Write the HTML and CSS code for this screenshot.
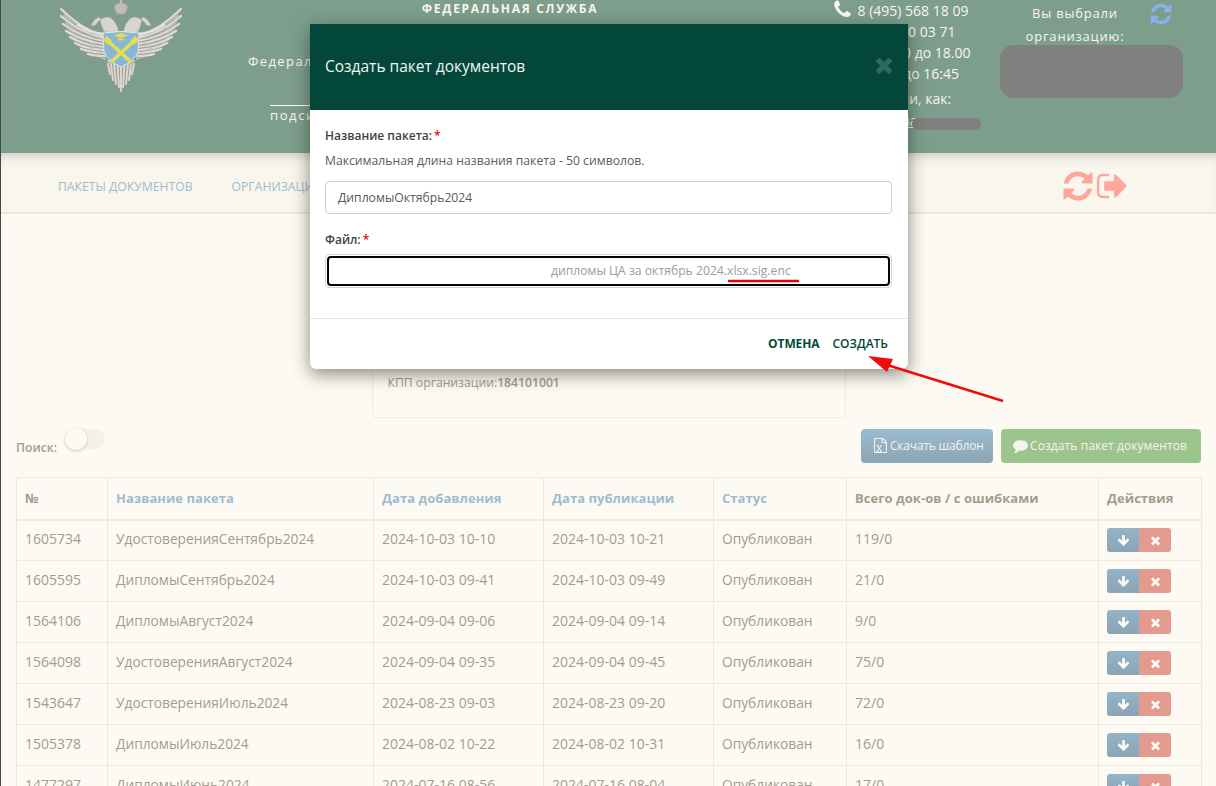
FILE: index.html
```html
<!DOCTYPE html>
<html lang="ru">
<head>
<meta charset="utf-8">
<title>Пакеты документов</title>
<link rel="stylesheet" href="styles.css">
</head>
<body>
<svg class="sprite" width="0" height="0">
  <symbol id="i-refresh" viewBox="0 0 1792 1792"><path d="M1639 1056q0 5-1 7-64 268-268 434.5t-478 166.5q-146 0-282.5-55t-243.5-157l-129 129q-19 19-45 19t-45-19-19-45v-448q0-26 19-45t45-19h448q26 0 45 19t19 45-19 45l-137 137q71 66 161 102t187 36q134 0 250-65t186-179q11-17 53-117 8-23 30-23h192q13 0 22.5 9.5t9.5 22.5zm25-800v448q0 26-19 45t-45 19h-448q-26 0-45-19t-19-45 19-45l138-138q-148-137-349-137-134 0-250 65t-186 179q-11 17-53 117-8 23-30 23h-199q-13 0-22.5-9.5t-9.5-22.5v-7q65-268 270-434.5t480-166.5q146 0 284 55.5t245 156.5l130-129q19-19 45-19t45 19 19 45z"/></symbol>
  <symbol id="i-phone" viewBox="0 0 1792 1792"><path d="M1600 1240q0 27-10 70.5t-21 68.5q-21 50-122 106-94 51-186 51-27 0-53-3.5t-57.5-12.5-47-14.5-55.5-20.5-49-18q-98-35-175-83-127-79-264-216t-216-264q-48-77-83-175-3-9-18-49t-20.5-55.5-14.5-47-12.5-57.5-3.5-53q0-92 51-186 56-101 106-122 25-11 68.5-21t70.5-10q14 0 21 3 18 6 53 76 11 19 30 54t35 63.5 31 53.5q3 4 17.5 25t21.5 35.5 7 28.5q0 20-28.5 50t-62 55-62 53-28.5 46q0 9 5 22.5t8.5 20.5 14 24 11.5 19q76 137 174 235t235 174q2 1 19 11.5t24 14 20.5 8.5 22.5 5q18 0 46-28.5t53-62 55-62 50-28.5q14 0 28.5 7t35.5 21.5 25 17.5q25 15 53.5 31t63.5 35 54 30q70 35 76 53 3 7 3 21z"/></symbol>
  <symbol id="i-signout" viewBox="0 0 1664 1792"><path d="M704 1440q0 4 1 20t.5 26.5-3 23.5-10 19.5-20.5 6.5h-320q-119 0-203.5-84.5t-84.5-203.5v-704q0-119 84.5-203.5t203.5-84.5h320q13 0 22.5 9.5t9.5 22.5q0 4 1 20t.5 26.5-3 23.5-10 19.5-20.5 6.5h-320q-66 0-113 47t-47 113v704q0 66 47 113t113 47h312l11.5 1 11.5 3 8 5.5 7 9 2 13.5zm928-544q0 26-19 45l-544 544q-19 19-45 19t-45-19-19-45v-288h-448q-26 0-45-19t-19-45v-384q0-26 19-45t45-19h448v-288q0-26 19-45t45-19 45 19l544 544q19 19 19 45z"/></symbol>
  <symbol id="i-comment" viewBox="0 0 1792 1792"><path d="M1792 896q0 174-120 321.5t-326 233-450 85.5q-70 0-145-8-198 175-460 242-49 14-114 22-17 2-30.5-9t-17.5-29v-1q-3-4-.5-12t2-10 4.5-9.5l6-9 7-8.5 8-9q7-8 31-34.5t34.5-38 31-39.5 32.5-51 27-59 26-76q-157-89-247.5-220t-90.5-281q0-130 71-248.5t191-204.5 286-136.5 348-50.5q244 0 450 85.5t326 233 120 321.5z"/></symbol>
  <symbol id="i-down" viewBox="0 0 1792 1792"><path d="M1675 832q0 53-37 90l-651 652q-39 37-91 37-53 0-90-37l-651-652q-38-36-38-90 0-53 38-91l74-75q39-37 91-37 53 0 90 37l294 294v-704q0-52 38-90t90-38h128q52 0 90 38t38 90v704l294-294q37-37 90-37 52 0 91 37l75 75q37 39 37 91z"/></symbol>
  <symbol id="i-times" viewBox="0 0 1792 1792"><path d="M1490 1322q0 40-28 68l-136 136q-28 28-68 28t-68-28l-294-294-294 294q-28 28-68 28t-68-28l-136-136q-28-28-28-68t28-68l294-294-294-294q-28-28-28-68t28-68l136-136q28-28 68-28t68 28l294 294 294-294q28-28 68-28t68 28l136 136q28 28 28 68t-28 68l-294 294 294 294q28 28 28 68z"/></symbol>
  <symbol id="i-excel" viewBox="0 0 1792 1792"><path d="M1596 380q28 28 48 76t20 88v1152q0 40-28 68t-68 28h-1344q-40 0-68-28t-28-68v-1600q0-40 28-68t68-28h896q40 0 88 20t76 48zm-444-244v376h376q-10-29-22-41l-313-313q-12-12-41-22zm384 1528v-1024h-416q-40 0-68-28t-28-68v-416h-768v1536h1280zm-1128-141v106h281v-106h-75l103-161q5-7 10-16.5t7.5-13.5 3.5-4h2q1 4 5 10 2 4 4.5 7.5t6 8 6.5 8.5l107 161h-76v106h291v-106h-68l-192-273 195-282h67v-107h-279v107h74l-103 159q-4 7-10 16.5t-9 13.5l-2 3h-2q-1-4-5-10-6-11-17-23l-106-159h76v-107h-290v107h68l189 272-194 283h-68z"/></symbol>
</svg>

<div class="page">
  <header class="top">
    <div class="logo-col">
      <svg class="logo" viewBox="0 0 122 92" width="122" height="92">
        <defs>
          <path id="feathers" d="M44 36 Q22 30 1 9 M44 38 Q20 33 1 16 M44 41 Q20 37 3 24 M44 44 Q22 41 6 31 M44 47 Q24 45 10 37 M44 50 Q26 49 15 43 M45 53 Q30 52 21 49 M45 56 Q34 56 28 54"/>
          <path id="tail" d="M48 64 L50 74 M51 64 L53 80 M54 64 L56 84 M57.500 64 L59 87 M61 64 L61 91 M64.500 64 L63 87 M68 64 L66 84 M71 64 L69 80 M74 64 L72 74"/>
          <g id="wing">
            <path class="wing-base" d="M44 33 Q24 30 3 12 Q6 30 14 42 Q26 54 46 60Z"/>
            <use href="#feathers" class="feather-edge"/>
            <use href="#feathers" class="feather-face"/>
            <path class="wing-band" d="M18 25 Q30 33 44 34"/>
            <path class="wing-tex" d="M16 30 L38 38 M20 36 L40 43 M24 42 L42 48 M30 48 L43 53"/>
            <path class="head" d="M31 26 Q33 19 39 17 L42 20 Q38 20 36 25 Z"/>
            <path class="head" d="M40 20 Q46 15 51 18 Q57 22 59 33 L44 32 Q41 26 40 20Z"/>
          </g>
        </defs>
        <use href="#wing"/>
        <use href="#wing" transform="matrix(-1 0 0 1 122 0)"/>
        <path class="wing-base" d="M47 60 H75 L70 76 L61 90 L52 76Z"/>
        <use href="#tail" class="feather-edge-thin"/>
        <use href="#tail" class="feather-face-thin"/>
        <path class="crown" d="M54 6 Q61 -1 68 6 L66 13 Q61 16 56 13Z"/>
        <path class="crown-top" d="M60 -2 H62 V3 H60Z"/>
        <path class="shield" d="M43 33 Q61 30 79 33 L78 52 Q74 61 61 67 Q48 61 44 52Z"/>
        <path class="arms-line" d="M47 40 L71 62 M75 40 L51 62"/>
        <path class="arms-line-head" d="M45 38 L50 43 M77 38 L72 43"/>
        <path class="arms" d="M54 36 L61 33 L68 35.500 L61 38Z M58 38.500 H64 V40.500 H58Z"/>
      </svg>
    </div>
    <div class="center-col">
      <div class="service">ФЕДЕРАЛЬНАЯ СЛУЖБА</div>
      <div class="registry">Федеральный реестр сведений о документах</div>
      <div class="subsystem">подсистема ведения реестра</div>
    </div>
    <div class="contact-col">
      <div class="contact-line"><svg class="ic-phone"><use href="#i-phone"/></svg>8 (495) 568 18 09</div>
      <div class="contact-line">8 (800) 100 03 71</div>
      <div class="contact-line">Пн-Чт с 9.00 до 18.00</div>
      <div class="contact-line">Пт с 9.00 до 16:45</div>
      <div class="contact-line contact-login">Вы вошли, как:</div>
      <div class="contact-user"><span class="user-name">Пользователь</span><span class="redact-pill"></span></div>
    </div>
    <div class="org-col">
      <div class="org-head">
        <div class="org-title">Вы выбрали организацию:</div>
        <svg class="ic-org-refresh"><use href="#i-refresh"/></svg>
      </div>
      <div class="redact-box"></div>
    </div>
  </header>

  <nav class="nav">
    <a class="nav-link">ПАКЕТЫ ДОКУМЕНТОВ</a>
    <a class="nav-link">ОРГАНИЗАЦИИ</a>
    <div class="nav-icons">
      <svg class="ic-nav-refresh"><use href="#i-refresh"/></svg>
      <svg class="ic-nav-signout"><use href="#i-signout"/></svg>
    </div>
  </nav>

  <main class="main">
    <section class="org-card">
      <p>Наименование организации:</p>
      <p>ИНН организации:</p>
      <p>КПП организации:<b>184101001</b></p>
    </section>

    <div class="toolbar">
      <div class="search">
        <span class="search-label">Поиск:</span>
        <span class="toggle"><span class="knob"></span></span>
      </div>
      <div class="actions">
        <button class="btn btn-blue"><svg class="ic-btn"><use href="#i-excel"/></svg>Скачать шаблон</button>
        <button class="btn btn-green"><svg class="ic-btn"><use href="#i-comment"/></svg>Создать пакет документов</button>
      </div>
    </div>

    <table class="grid">
      <colgroup>
        <col class="c1"><col class="c2"><col class="c3"><col class="c4"><col class="c5"><col class="c6"><col class="c7">
      </colgroup>
      <thead>
        <tr><th>№</th><th class="sort">Название пакета</th><th class="sort">Дата добавления</th><th class="sort">Дата публикации</th><th class="sort">Статус</th><th>Всего док-ов / с ошибками</th><th>Действия</th></tr>
      </thead>
      <tbody>
        <tr><td>1605734</td><td>УдостоверенияСентябрь2024</td><td>2024-10-03 10-10</td><td>2024-10-03 10-21</td><td>Опубликован</td><td>119/0</td><td><span class="row-btns"><span class="rb rb-down"><svg><use href="#i-down"/></svg></span><span class="rb rb-del"><svg><use href="#i-times"/></svg></span></span></td></tr>
        <tr><td>1605595</td><td>ДипломыСентябрь2024</td><td>2024-10-03 09-41</td><td>2024-10-03 09-49</td><td>Опубликован</td><td>21/0</td><td><span class="row-btns"><span class="rb rb-down"><svg><use href="#i-down"/></svg></span><span class="rb rb-del"><svg><use href="#i-times"/></svg></span></span></td></tr>
        <tr><td>1564106</td><td>ДипломыАвгуст2024</td><td>2024-09-04 09-06</td><td>2024-09-04 09-14</td><td>Опубликован</td><td>9/0</td><td><span class="row-btns"><span class="rb rb-down"><svg><use href="#i-down"/></svg></span><span class="rb rb-del"><svg><use href="#i-times"/></svg></span></span></td></tr>
        <tr><td>1564098</td><td>УдостоверенияАвгуст2024</td><td>2024-09-04 09-35</td><td>2024-09-04 09-45</td><td>Опубликован</td><td>75/0</td><td><span class="row-btns"><span class="rb rb-down"><svg><use href="#i-down"/></svg></span><span class="rb rb-del"><svg><use href="#i-times"/></svg></span></span></td></tr>
        <tr><td>1543647</td><td>УдостоверенияИюль2024</td><td>2024-08-23 09-03</td><td>2024-08-23 09-20</td><td>Опубликован</td><td>72/0</td><td><span class="row-btns"><span class="rb rb-down"><svg><use href="#i-down"/></svg></span><span class="rb rb-del"><svg><use href="#i-times"/></svg></span></span></td></tr>
        <tr><td>1505378</td><td>ДипломыИюль2024</td><td>2024-08-02 10-22</td><td>2024-08-02 10-31</td><td>Опубликован</td><td>16/0</td><td><span class="row-btns"><span class="rb rb-down"><svg><use href="#i-down"/></svg></span><span class="rb rb-del"><svg><use href="#i-times"/></svg></span></span></td></tr>
        <tr><td>1477297</td><td>ДипломыИюнь2024</td><td>2024-07-16 08-56</td><td>2024-07-16 08-04</td><td>Опубликован</td><td>17/0</td><td><span class="row-btns"><span class="rb rb-down"><svg><use href="#i-down"/></svg></span><span class="rb rb-del"><svg><use href="#i-times"/></svg></span></span></td></tr>
      </tbody>
    </table>
  </main>
</div>

<div class="modal">
  <div class="modal-head">
    <span class="modal-title">Создать пакет документов</span>
    <svg class="modal-close"><use href="#i-times"/></svg>
  </div>
  <div class="modal-body">
    <div class="field-label">Название пакета:<span class="req">*</span></div>
    <div class="hint">Максимальная длина названия пакета - 50 символов.</div>
    <div class="text-input">ДипломыОктябрь2024</div>
    <div class="field-label file-label">Файл:<span class="req">*</span></div>
    <div class="file-outer"><div class="file-inner">дипломы ЦА за октябрь 2024.xlsx.sig.enc</div></div>
  </div>
  <div class="modal-foot">
    <span class="foot-btn foot-cancel">ОТМЕНА</span>
    <span class="foot-btn foot-create">СОЗДАТЬ</span>
  </div>
</div>

<svg class="annot" width="1216" height="786" viewBox="0 0 1216 786">
  <line x1="728" y1="281" x2="799" y2="281" stroke="#e8000b" stroke-width="2.500"/>
  <line x1="1003" y1="401" x2="884" y2="364" stroke="#f20a0a" stroke-width="2.500"/>
  <path d="M868 356 L893 359 L887 372Z" fill="#f20a0a"/>
</svg>
</body>
</html>
```

FILE: styles.css
```css
* { box-sizing: border-box; }
html, body { margin: 0; padding: 0; height: 786px; overflow: hidden; }
body { font-family: "Open Sans", "Liberation Sans", sans-serif; font-size: 13px; color: #a39c8e; background: #fdfaf3; position: relative; }
.sprite { position: absolute; }
.page { border-left: 1px solid #444a4a; height: 786px; overflow: hidden; }

/* header */
.top { height: 153px; background: #7d9e8c; display: flex; color: #f8f6ee; }
.logo-col { width: 239px; padding: 0 0 0 59px; flex: none; }
.logo { display: block; overflow: hidden; }
.wing-base { fill: #c6c5be; }
.feather-edge { fill: none; stroke: #9c9c95; stroke-width: 3.400; stroke-linecap: round; }
.feather-face { fill: none; stroke: #dcdbd5; stroke-width: 2.200; stroke-linecap: round; }
.feather-edge-thin { fill: none; stroke: #9c9c95; stroke-width: 3; stroke-linecap: round; }
.feather-face-thin { fill: none; stroke: #dcdbd5; stroke-width: 1.800; stroke-linecap: round; }
.wing-band { fill: none; stroke: #e2e1db; stroke-width: 2.500; stroke-linecap: round; }
.wing-tex { fill: none; stroke: #a9a8a1; stroke-width: .8; stroke-dasharray: 2 1.500; }
.head { fill: #d6d5cf; stroke: #a0a09a; stroke-width: .6; }
.crown { fill: #bdbcb6; stroke: #9c9b95; stroke-width: .6; }
.crown-top { fill: #bdbcb6; }
.shield { fill: #86b8d6; stroke: #dfe7ea; stroke-width: 1; }
.arms { fill: #e8dc52; }
.arms-line { fill: none; stroke: #e8dc52; stroke-width: 3.600; }
.arms-line-head { fill: none; stroke: #e8dc52; stroke-width: 5.500; }
.center-col { width: 540px; flex: none; text-align: center; padding-top: 1px; }
.service { font-size: 12px; font-weight: 700; letter-spacing: 1.7px; line-height: 15px; }
.registry { text-align: left; padding-left: 8px; margin-top: 36px; font-size: 13px; letter-spacing: 1.4px; line-height: 18px; white-space: nowrap; }
.subsystem { text-align: left; margin: 35px 0 0 30px; border-top: 1px solid #fff; font-size: 13px; letter-spacing: 1.6px; line-height: 18px; font-weight: 400; }
.contact-col { width: 160px; margin-left: 40px; flex: none; text-align: center; font-size: 14px; line-height: 21px; position: relative; white-space: nowrap; }
.contact-line { height: 21px; }
.ic-phone { width: 21px; height: 21px; fill: #fbfaf4; margin: -6px 5px -6px 0; vertical-align: middle; position: relative; top: -3px; }
.contact-login { margin-top: 4px; }
.contact-user { position: relative; margin-top: 4px; line-height: 16px; }
.user-name { text-decoration: underline; }
.redact-pill { position: absolute; left: 92px; top: 5px; width: 69px; height: 12px; border-radius: 6px; background: #808080; }
.org-col { width: 183px; margin-left: 20px; flex: none; padding-top: 2px; }
.org-head { display: flex; height: 43px; }
.org-title { width: 150px; text-align: center; font-size: 13px; line-height: 23px; letter-spacing: .8px; }
.ic-org-refresh { width: 24px; height: 24px; fill: #8bb0ec; margin: 0 0 0 -1px; }
.redact-box { height: 53px; border-radius: 14px; background: #808080; }

/* nav */
.nav { height: 61px; background: #f9f6ee; border-bottom: 2px solid #ebe7dd; display: flex; align-items: center; padding: 0 0 0 57px; box-shadow: inset 0 10px 12px -8px rgba(110,105,90,.35); position: relative; }
.nav-link { font-size: 12.200px; color: #a0bccd; margin-right: 39px; padding-top: 8px; }
.nav-icons { position: absolute; left: 1060px; top: 16px; display: flex; }
.ic-nav-refresh { width: 34px; height: 34px; fill: #ffa69a; }
.ic-nav-signout { width: 33px; height: 34px; fill: #ffa69a; }

/* main */
.main { padding: 0 15px; }
.org-card { width: 474px; height: 180px; margin: 24px auto 0; border: 1px solid #f0ece2; border-radius: 4px; padding: 45px 15px 0; font-size: 12.200px; }
.org-card p { margin: 0 0 27px; line-height: 18px; }
.org-card p:last-child b { font-weight: 600; }
.toolbar { display: flex; justify-content: space-between; margin-top: 11px; height: 34px; }
.search { display: flex; }
.search-label { font-size: 12.200px; font-weight: 600; padding-top: 10px; }
.toggle { position: relative; display: block; width: 40px; height: 20px; border-radius: 10px; background: #f4f1ea; margin-left: 8px; }
.knob { position: absolute; left: 0; top: -1px; width: 22px; height: 22px; border-radius: 50%; background: #fdfaf3; box-shadow: 0 1px 3px rgba(90,85,70,.3); }
.actions { display: flex; gap: 8px; }
.btn { height: 34px; border: 0; border-radius: 4px; font: inherit; font-size: 12px; color: #f5f4ec; padding: 0 0 2px 12px; display: flex; align-items: center; white-space: nowrap; }
.btn-blue { width: 132px; background: linear-gradient(#9bbcd2, #8ca4b3); letter-spacing: -.2px; }
.btn-green { width: 200px; background: #9cc48d; letter-spacing: .08px; }
.ic-btn { width: 15px; height: 15px; fill: #f5f4ec; margin-right: 2px; flex: none; }
.grid { border-collapse: collapse; table-layout: fixed; width: 1185px; margin-top: 14px; }
.c1 { width: 91px; } .c2 { width: 266px; } .c3 { width: 170px; } .c4 { width: 170px; } .c5 { width: 133px; } .c6 { width: 252px; } .c7 { width: 103px; }
.grid th, .grid td { border: 1px solid #ece8df; padding: 0 9px 0 8px; text-align: left; white-space: nowrap; }
.grid th { height: 42px; font-size: 13px; font-weight: 700; color: #a39c8e; border-bottom-width: 2px; letter-spacing: .05px; }
.grid th.sort { color: #9dbcd2; }
.grid td { height: 41px; font-size: 14px; padding-bottom: 3px; }
.grid td:nth-child(2), .grid td:nth-child(5) { font-size: 13.750px; }
.grid td:last-child { padding-bottom: 0; }
.row-btns { display: flex; width: 64px; height: 24px; }
.rb { display: flex; align-items: center; justify-content: center; height: 24px; }
.rb svg { fill: #fbfaf3; }
.rb-down { width: 32px; background: linear-gradient(#93b4c9, #8ba4b4); border-radius: 3px 0 0 3px; }
.rb-down svg { width: 13px; height: 13px; }
.rb-del { width: 32px; background: #e39a8f; border-radius: 0 3px 3px 0; }
.rb-del svg { width: 13px; height: 13px; }

/* modal */
.modal { position: absolute; left: 310px; top: 24px; width: 598px; height: 345px; background: #fff; border-radius: 0 0 6px 6px; box-shadow: 0 5px 18px rgba(40,40,30,.55); color: #5c5c5c; font-size: 12.200px; }
.modal-head { height: 86px; background: #03473b; display: flex; align-items: center; justify-content: space-between; padding: 0 12px 2px 15px; }
.modal-title { color: #f2f5f3; font-size: 15.500px; font-weight: 400; }
.modal-close { width: 24px; height: 24px; fill: #2f6a5c; margin-top: -2px; }
.modal-body { height: 209px; padding: 17px 16px 0 15px; border-bottom: 1px solid #e7e7e7; }
.field-label { font-weight: 600; color: #3f3f3f; line-height: 18px; font-size: 12px; }
.req { color: #e60000; margin-left: 2px; }
.hint { line-height: 18px; margin-top: 7px; }
.text-input { height: 33px; margin-top: 11px; border: 1px solid #cfcfcf; border-radius: 4px; line-height: 31px; padding-left: 12px; color: #595959; }
.file-label { margin-top: 17px; }
.file-outer { height: 34px; margin-top: 5px; border: 1px solid #d4d4d4; border-radius: 4px; padding: 1px; }
.file-inner { height: 30px; border: 2px solid #050505; border-radius: 4px; color: #9b9b9b; padding-left: 222px; line-height: 25px; white-space: nowrap; }
.modal-foot { height: 50px; display: flex; justify-content: flex-end; align-items: center; gap: 13px; padding: 0 20px 2px 0; }
.foot-btn { color: #03473b; font-size: 12px; font-weight: 600; }
.foot-cancel { font-weight: 700; letter-spacing: -.1px; }

.annot { position: absolute; left: 0; top: 0; pointer-events: none; }
```
